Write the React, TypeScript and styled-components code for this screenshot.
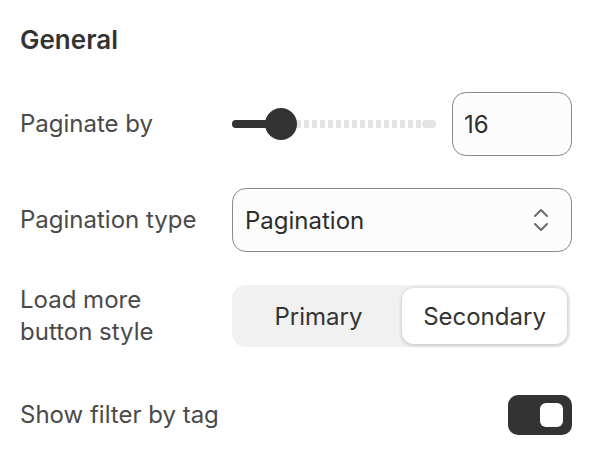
import React, {FC, useState} from 'react';
import styled, {createGlobalStyle} from "styled-components";

//region Styled
const GlobalStyle = createGlobalStyle`
  html, body {
    margin: 0;
    padding: 0;
    background: #ffffff;
  }

  body {
    font-family: Inter, "Noto Sans", sans-serif;
    color: #333333;
    -webkit-font-smoothing: antialiased;
  }
`;

const Panel = styled.div`
  width: 592px;
  box-sizing: border-box;
  padding: 24px 20px 0 20px;
`;

const Heading = styled.h2`
  margin: 0 0 36px 0;
  font-size: 26px;
  line-height: 32px;
  font-weight: 600;
  color: #333333;
`;

const Rows = styled.div`
  display: flex;
  flex-direction: column;
  gap: 32px;
`;

const Row = styled.div<{ $offset?: number }>`
  display: grid;
  grid-template-columns: 212px 1fr;
  align-items: center;
  min-height: 64px;
  margin-top: ${p => p.$offset ?? 0}px;
`;

const Label = styled.div`
  font-size: 24px;
  line-height: 32px;
  color: #4a4a4a;
`;

const Control = styled.div<{ $end?: boolean }>`
  display: flex;
  align-items: center;
  justify-content: ${p => p.$end ? "flex-end" : "flex-start"};
  gap: 16px;
`;

const SliderWrap = styled.div`
  position: relative;
  flex: 1;
  height: 32px;
  display: flex;
  align-items: center;
`;

const Track = styled.div`
  position: relative;
  width: 100%;
  height: 8px;
  border-radius: 4px;
  background: repeating-linear-gradient(
    to right,
    #e4e4e4 0px,
    #e4e4e4 5px,
    transparent 5px,
    transparent 8px
  );
`;

const TrackEnd = styled.div`
  position: absolute;
  right: 0;
  top: 0;
  width: 14px;
  height: 8px;
  border-radius: 4px;
  background: #e4e4e4;
`;

const Fill = styled.div`
  position: absolute;
  left: 0;
  top: 0;
  height: 8px;
  border-radius: 4px;
  background: #333333;
`;

const Thumb = styled.div`
  position: absolute;
  top: 50%;
  width: 32px;
  height: 32px;
  margin: -16px 0 0 -16px;
  border-radius: 50%;
  background: #333333;
`;

const NumberBox = styled.div`
  width: 120px;
  height: 64px;
  box-sizing: border-box;
  border: 1px solid #8a8a8a;
  border-radius: 14px;
  background: #fcfcfc;
  display: flex;
  align-items: center;
  padding: 0 11px;
  font-size: 24px;
  color: #2e2e2e;
`;

const Select = styled.div`
  width: 100%;
  height: 64px;
  box-sizing: border-box;
  border: 1px solid #8a8a8a;
  border-radius: 14px;
  background: #fcfcfc;
  display: flex;
  align-items: center;
  justify-content: space-between;
  padding: 0 22px 0 12px;
  font-size: 24px;
  color: #2e2e2e;
`;

const Segmented = styled.div`
  width: 338px;
  height: 62px;
  box-sizing: border-box;
  padding: 3px;
  border-radius: 14px;
  background: #f1f1f1;
  display: grid;
  grid-template-columns: 167px 1fr;
`;

const Segment = styled.div<{ $active: boolean }>`
  display: flex;
  align-items: center;
  justify-content: center;
  border-radius: 12px;
  font-size: 24px;
  color: #333333;
  cursor: pointer;
  background: ${p => p.$active ? "#ffffff" : "transparent"};
  box-shadow: ${p => p.$active ? "0 1px 4px rgba(0, 0, 0, 0.22)" : "none"};
`;

const Toggle = styled.div<{ $on: boolean }>`
  width: 64px;
  height: 40px;
  box-sizing: border-box;
  padding: 8px 9px;
  border-radius: 10px;
  background: ${p => p.$on ? "#333333" : "#d0d0d0"};
  display: flex;
  justify-content: ${p => p.$on ? "flex-end" : "flex-start"};
  cursor: pointer;
`;

const Knob = styled.div`
  width: 23px;
  height: 24px;
  border-radius: 6px;
  background: #ffffff;
`;
//endregion

const Chevrons: FC = () => (
    <svg width="16" height="26" viewBox="0 0 16 26" fill="none" stroke="#6b6b6b" strokeWidth="2" strokeLinecap="round" strokeLinejoin="round">
        <path d="M2 9 L8 3 L14 9"/>
        <path d="M2 17 L8 23 L14 17"/>
    </svg>
);

const App: FC = () => {
    const [value] = useState(16);
    const [style, setStyle] = useState("Secondary");
    const [showTags, setShowTags] = useState(true);

    const min = 1;
    const max = 100;
    const percent = ((value - min) / (max - min)) * 100 + 8.7;

    return (
        <>
            <GlobalStyle/>
            <Panel>
                <Heading>General</Heading>
                <Rows>
                    <Row>
                        <Label>Paginate by</Label>
                        <Control>
                            <SliderWrap>
                                <Track>
                                    <TrackEnd/>
                                    <Fill style={{width: `${percent}%`}}/>
                                    <Thumb style={{left: `${percent}%`}}/>
                                </Track>
                            </SliderWrap>
                            <NumberBox>{value}</NumberBox>
                        </Control>
                    </Row>
                    <Row>
                        <Label>Pagination type</Label>
                        <Control>
                            <Select>
                                <span>Pagination</span>
                                <Chevrons/>
                            </Select>
                        </Control>
                    </Row>
                    <Row>
                        <Label>Load more<br/>button style</Label>
                        <Control>
                            <Segmented>
                                {["Primary", "Secondary"].map(option => (
                                    <Segment
                                        key={option}
                                        $active={style === option}
                                        onClick={() => setStyle(option)}
                                    >
                                        {option}
                                    </Segment>
                                ))}
                            </Segmented>
                        </Control>
                    </Row>
                    <Row $offset={3}>
                        <Label>Show filter by tag</Label>
                        <Control $end>
                            <Toggle $on={showTags} onClick={() => setShowTags(!showTags)}>
                                <Knob/>
                            </Toggle>
                        </Control>
                    </Row>
                </Rows>
            </Panel>
        </>
    );
};

export default App;
